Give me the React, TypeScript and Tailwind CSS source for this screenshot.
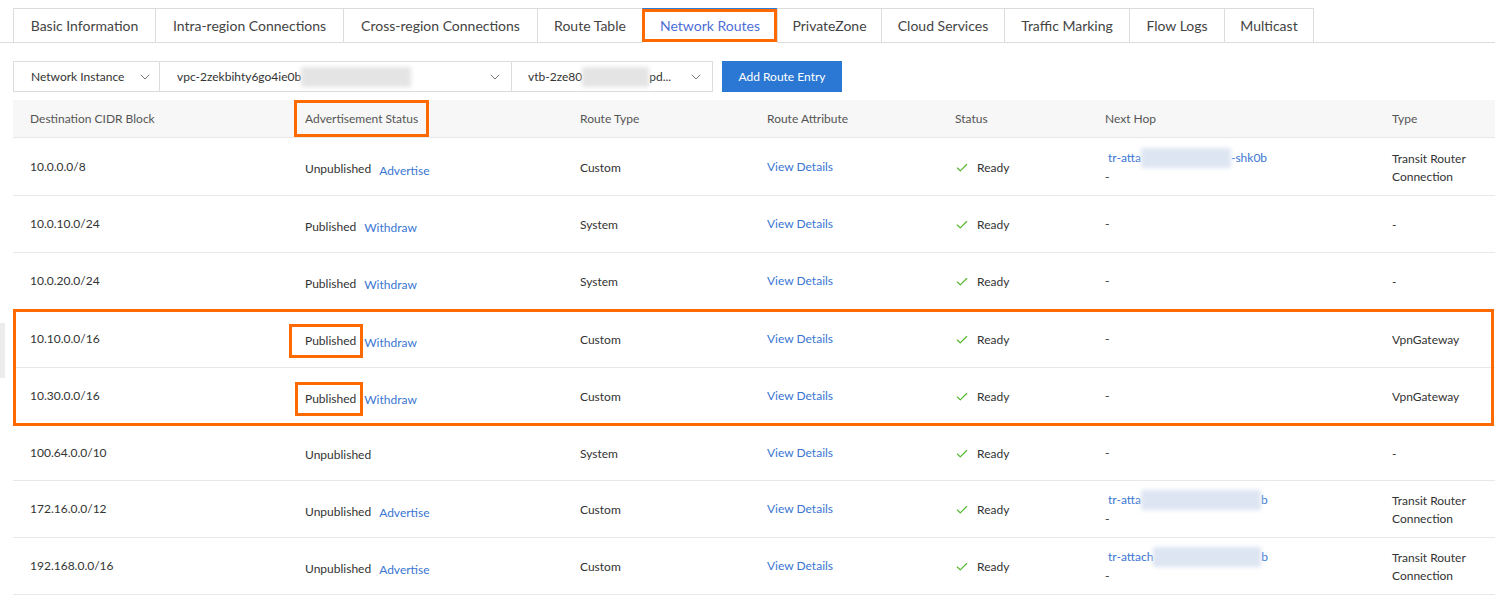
import React from 'react';
import { Check, ChevronDown } from 'lucide-react';

const tabs = [
  { label: 'Basic Information', w: 'w-[142px]' },
  { label: 'Intra-region Connections', w: 'w-[188px]' },
  { label: 'Cross-region Connections', w: 'w-[194px]' },
  { label: 'Route Table', w: 'w-[105px]' },
  { label: 'Network Routes', w: 'w-[135px]', active: true },
  { label: 'PrivateZone', w: 'w-[104px]' },
  { label: 'Cloud Services', w: 'w-[123px]' },
  { label: 'Traffic Marking', w: 'w-[125px]' },
  { label: 'Flow Logs', w: 'w-[95px]' },
  { label: 'Multicast', w: 'w-[90px]' },
];

type Row = {
  cidr: string;
  published: boolean;
  action?: 'Advertise' | 'Withdraw';
  routeType: string;
  hop?: { pre: string; blur: string; post: string };
  type: string;
  boxed?: boolean;
  h: string;
};

const rows: Row[] = [
  { cidr: '10.0.0.0/8', published: false, action: 'Advertise', routeType: 'Custom', hop: { pre: 'tr-atta', blur: 'w-[90px]', post: '-shk0b' }, type: 'Transit Router Connection', h: 'h-[58px]' },
  { cidr: '10.0.10.0/24', published: true, action: 'Withdraw', routeType: 'System', type: '-', h: 'h-[57px]' },
  { cidr: '10.0.20.0/24', published: true, action: 'Withdraw', routeType: 'System', type: '-', h: 'h-[57px]' },
  { cidr: '10.10.0.0/16', published: true, action: 'Withdraw', routeType: 'Custom', type: 'VpnGateway', boxed: true, h: 'h-[58px]' },
  { cidr: '10.30.0.0/16', published: true, action: 'Withdraw', routeType: 'Custom', type: 'VpnGateway', boxed: true, h: 'h-[57px]' },
  { cidr: '100.64.0.0/10', published: false, routeType: 'System', type: '-', h: 'h-[56px]' },
  { cidr: '172.16.0.0/12', published: false, action: 'Advertise', routeType: 'Custom', hop: { pre: 'tr-atta', blur: 'w-[120px]', post: 'b' }, type: 'Transit Router Connection', h: 'h-[57px]' },
  { cidr: '192.168.0.0/16', published: false, action: 'Advertise', routeType: 'Custom', hop: { pre: 'tr-attach', blur: 'w-[108px]', post: 'b' }, type: 'Transit Router Connection', h: 'h-[57px]' },
];

const cols = 'grid grid-cols-[275px_275px_187px_188px_150px_287px_1fr]';

const TableRow: React.FC<{ r: Row }> = ({ r }) => (
  <div className={`${cols} ${r.h} items-center border-b border-[#e8e8e8] text-[12px] text-[#333]`}>
    <div className="pl-[17px]">{r.cidr}</div>
    <div className="pl-[17px] mt-[5px] flex items-center">
      <span className="relative">
        {r.published ? 'Published' : 'Unpublished'}
        {r.boxed && (
          <span className={`absolute ${r.cidr === '10.10.0.0/16' ? '-left-[16px]' : '-left-[10px]'} -right-[7px] -top-[8px] -bottom-[8px] border-[3px] border-[#ff6a00] pointer-events-none`} />
        )}
      </span>
      {r.action && <span className="text-[#3a76d2] mt-[3px] ml-[8px]">{r.action}</span>}
    </div>
    <div className="pl-[17px] mt-[2px]">{r.routeType}</div>
    <div className="pl-[17px] text-[#3a76d2]">View Details</div>
    <div className="pl-[17px] mt-[2px] flex items-center gap-[8px]">
      <Check size={14} strokeWidth={2} className="text-[#52b62b]" />
      <span>Ready</span>
    </div>
    <div className="pl-[17px] leading-[18px]">
      {r.hop ? (
        <>
          <div className="flex items-center text-[#3a76d2] pl-[3px]">
            <span>{r.hop.pre}</span>
            <span className={`${r.hop.blur} h-[20px] bg-[#dde5f2] blur-[2px]`} />
            <span>{r.hop.post}</span>
          </div>
          <div>-</div>
        </>
      ) : (
        <div>-</div>
      )}
    </div>
    <div className="pl-[17px] leading-[18px] pr-[20px] mt-[2px]">
      {r.type === 'Transit Router Connection' ? (
        <>
          <div>Transit Router</div>
          <div>Connection</div>
        </>
      ) : (
        r.type
      )}
    </div>
  </div>
);

export default function App() {
  return (
    <div className="relative w-[1495px] h-[595px] overflow-hidden bg-white font-['Lato','Liberation_Sans',sans-serif]">
      {/* tabs */}
      <div className="pt-[8px] pl-[13px] flex border-b border-[#dcdcdc]">
        {tabs.map((t) => (
          <div
            key={t.label}
            className={`relative ${t.w} h-[35px] -mb-px flex items-center justify-center text-[14px] border-l border-t border-[#dcdcdc] last:border-r ${
              t.active ? 'bg-white text-[#4f6fd6] border-t-2 border-t-[#2f7bd9] border-b border-b-white' : 'text-[#444]'
            }`}
          >
            <span className="-mt-[2px]">{t.label}</span>
            {t.active && <span className="absolute -left-px right-0 -top-[1px] bottom-0 border-[3px] border-[#ff6a00] pointer-events-none" />}
          </div>
        ))}
      </div>

      {/* filters */}
      <div className="mt-[18px] ml-[13px] flex items-center h-[31px] text-[12px] text-[#333]">
        <div className="w-[147px] h-full border border-[#dcdcdc] flex items-center justify-between pl-[17px] pr-[6px]">
          <span>Network Instance</span>
          <ChevronDown size={16} strokeWidth={1.5} className="text-[#777]" />
        </div>
        <div className="w-[352px] h-full border border-l-0 border-[#dcdcdc] flex items-center justify-between pl-[17px] pr-[8px]">
          <span className="flex items-center">
            vpc-2zekbihty6go4ie0b
            <span className="w-[110px] h-[20px] bg-[#e4e4e4] blur-[2px]" />
          </span>
          <ChevronDown size={16} strokeWidth={1.5} className="text-[#777]" />
        </div>
        <div className="w-[201px] h-full border border-l-0 border-[#dcdcdc] flex items-center justify-between pl-[16px] pr-[8px]">
          <span className="flex items-center">
            vtb-2ze80
            <span className="w-[67px] h-[20px] bg-[#e4e4e4] blur-[2px]" />
            pd...
          </span>
          <ChevronDown size={16} strokeWidth={1.5} className="text-[#777]" />
        </div>
        <button className="ml-[9px] w-[120px] h-full bg-[#2a78d3] text-white text-[12px]">Add Route Entry</button>
      </div>

      {/* table */}
      <div className="mt-[8px] ml-[13px]">
        <div className={`${cols} h-[38px] items-center bg-[#f7f7f7] border-b border-[#e8e8e8] text-[12px] text-[#555]`}>
          <div className="pl-[17px]">Destination CIDR Block</div>
          <div className="pl-[17px]">
            <span className="relative">
              Advertisement Status
              <span className="absolute -left-[11px] -right-[11px] -top-[11px] -bottom-[11px] border-[3px] border-[#ff6a00]" />
            </span>
          </div>
          <div className="pl-[17px]">Route Type</div>
          <div className="pl-[17px]">Route Attribute</div>
          <div className="pl-[17px]">Status</div>
          <div className="pl-[17px]">Next Hop</div>
          <div className="pl-[17px]">Type</div>
        </div>
        {rows.slice(0, 3).map((r) => (
          <TableRow key={r.cidr} r={r} />
        ))}
        <div className="relative">
          {rows.slice(3, 5).map((r) => (
            <TableRow key={r.cidr} r={r} />
          ))}
          <span className="absolute left-0 right-[1px] -top-[1px] -bottom-[1px] border-[3px] border-[#ff6a00] pointer-events-none" />
        </div>
        {rows.slice(5).map((r) => (
          <TableRow key={r.cidr} r={r} />
        ))}
      </div>

      {/* scroll handle on left edge */}
      <div className="absolute left-0 top-[323px] w-[5px] h-[55px] bg-[#ececec]" />
    </div>
  );
}
